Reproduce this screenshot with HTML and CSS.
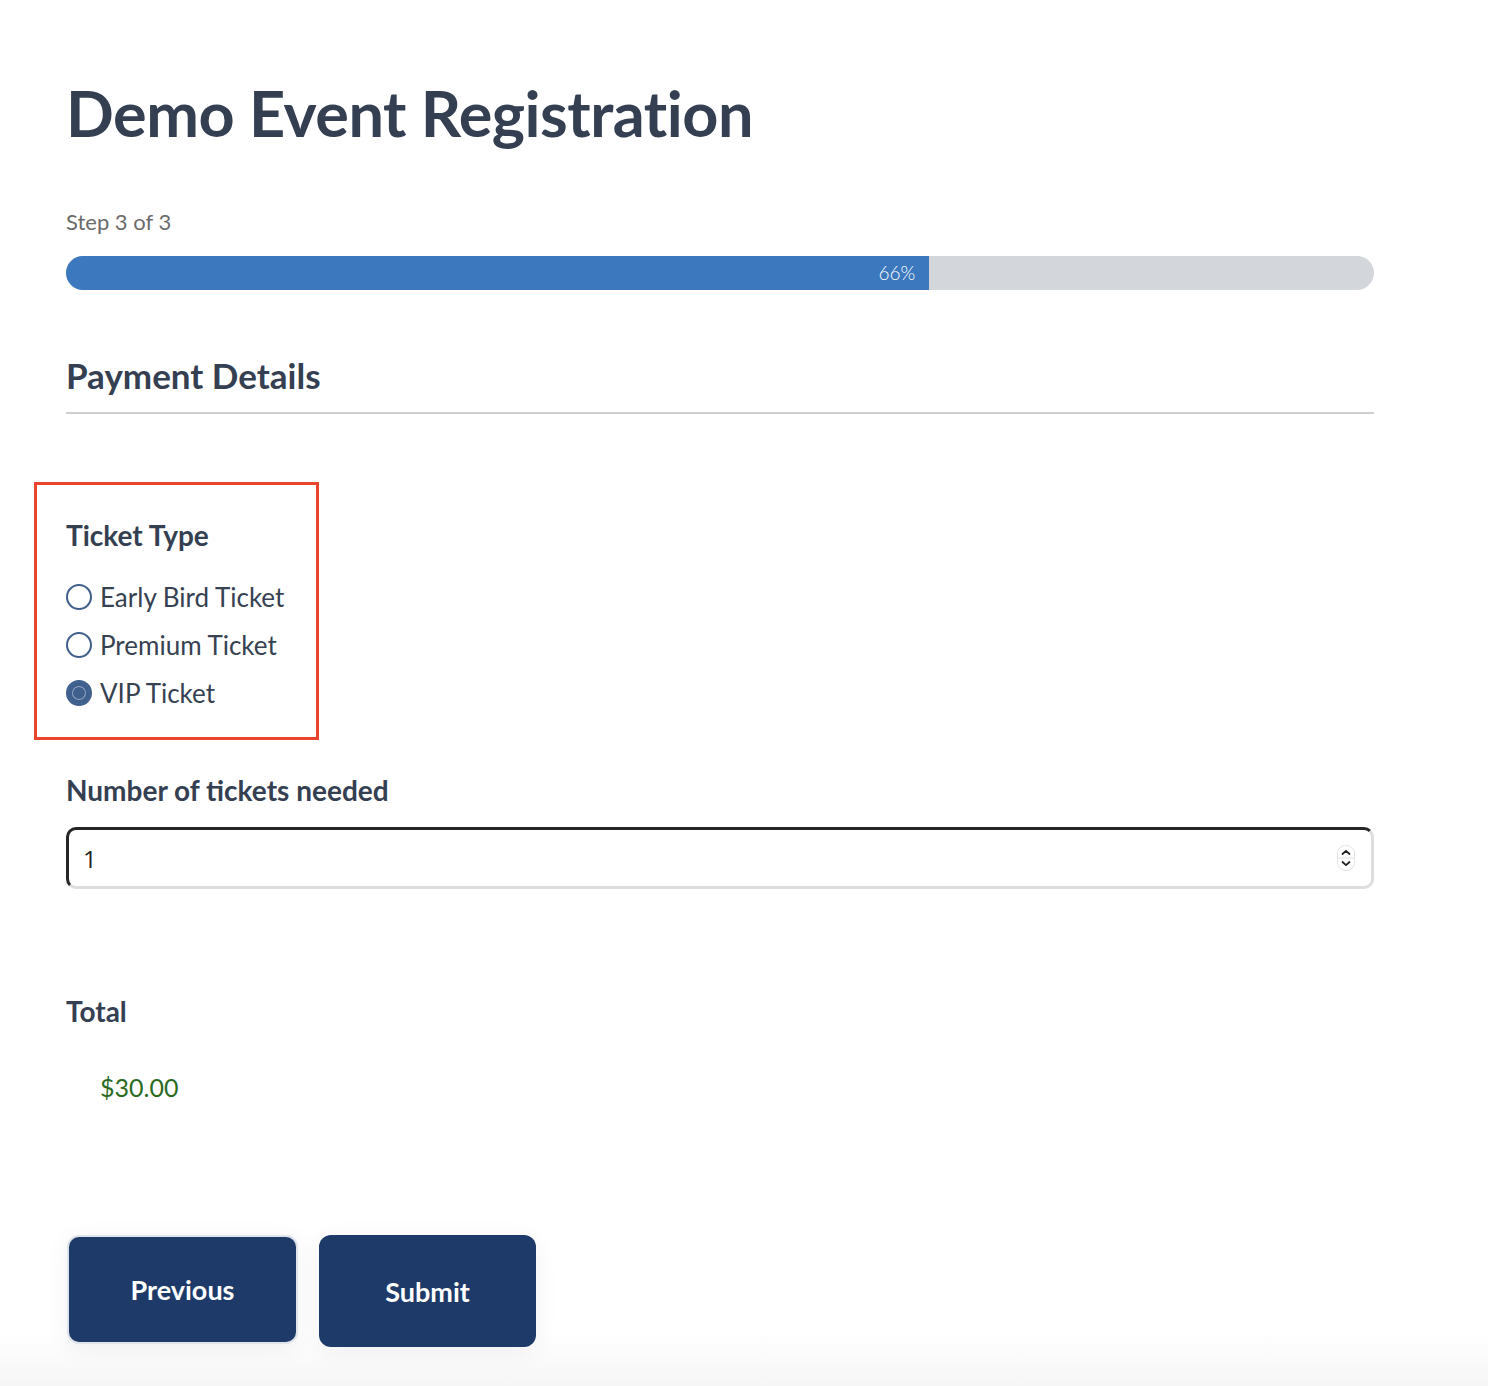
FILE: index.html
```html
<!DOCTYPE html>
<html>
<head>
  <title>Demo Event Registration</title>
  <link rel="stylesheet" href="styles.css">
</head>
<body>
  <div class="page">
    <h1 class="title">Demo Event Registration</h1>

    <div class="steps">
      <div class="step-label">Step 3 of 3</div>
      <div class="progress">
        <div class="progress-fill" style="width: 66%;">66%</div>
      </div>
    </div>

    <div class="section">
      <h2 class="section-title">Payment Details</h2>
    </div>

    <div class="field ticket-box">
      <div class="label">Ticket Type</div>
      <label class="choice"><span class="radio"></span>Early Bird Ticket</label>
      <label class="choice"><span class="radio"></span>Premium Ticket</label>
      <label class="choice"><span class="radio checked"></span>VIP Ticket</label>
    </div>

    <div class="field tickets">
      <div class="label">Number of tickets needed</div>
      <div class="number-input">
        <span class="value">1</span>
        <span class="spinner">
          <svg width="18" height="26" viewBox="0 0 18 26">
            <rect x="0.5" y="0.5" width="17" height="25" rx="8" fill="#fff" stroke="#e2e2e2"/>
            <line x1="1" y1="13" x2="17" y2="13" stroke="#e2e2e2"/>
            <path d="M5.5 9 L9 5.8 L12.5 9" fill="none" stroke="#222" stroke-width="1.8" stroke-linecap="round" stroke-linejoin="round"/>
            <path d="M5.5 17 L9 20.2 L12.5 17" fill="none" stroke="#222" stroke-width="1.8" stroke-linecap="round" stroke-linejoin="round"/>
          </svg>
        </span>
      </div>
    </div>

    <div class="field total">
      <div class="label">Total</div>
      <div class="amount">$30.00</div>
    </div>

    <div class="actions">
      <button class="btn btn-prev">Previous</button>
      <button class="btn">Submit</button>
    </div>
  </div>
</body>
</html>
```

FILE: styles.css
```css
* {
  margin: 0;
  padding: 0;
  box-sizing: border-box;
}

body {
  width: 1488px;
  height: 1386px;
  font-family: Lato, "Liberation Sans", sans-serif;
  color: #364152;
  background: linear-gradient(180deg, #ffffff 0%, #ffffff 96%, #f6f6f6 100%);
  overflow: hidden;
}

.page {
  padding: 78px 114px 0 66px;
}

.title {
  font-size: 63px;
  font-weight: 700;
  color: #353f52;
  letter-spacing: -0.5px;
  line-height: 70px;
}

.steps {
  margin-top: 61px;
}

.step-label {
  font-size: 22px;
  font-weight: 400;
  color: #6b6b6b;
  line-height: 26px;
}

.progress {
  margin-top: 21px;
  height: 34px;
  background: #d3d6da;
  border-radius: 17px;
  overflow: hidden;
}

.progress-fill {
  height: 100%;
  background: #3b78bd;
  color: #fff;
  font-size: 19px;
  font-weight: 300;
  line-height: 34px;
  text-align: right;
  padding-right: 14px;
}

.section {
  margin-top: 65px;
  border-bottom: 2px solid #cfcfcf;
  padding-bottom: 17px;
}

.section-title {
  font-size: 35px;
  font-weight: 700;
  color: #353f52;
  line-height: 40px;
}

.field {
  margin-top: 40px;
}

.ticket-box {
  margin-top: 68px;
  margin-left: -32px;
  width: 285px;
  border: 3px solid #e8452c;
  padding: 34px 0 20px 29px;
}

.label {
  font-size: 28px;
  font-weight: 700;
  color: #353f52;
  line-height: 32px;
}

.ticket-box .label {
  margin-bottom: 22px;
}

.choice {
  display: flex;
  align-items: center;
  gap: 8px;
  font-size: 26px;
  line-height: 30px;
  height: 48px;
  color: #364152;
}

.radio {
  width: 26px;
  height: 26px;
  border-radius: 50%;
  border: 2.5px solid #3f5f8c;
  background: #fff;
  flex-shrink: 0;
}

.radio.checked {
  background: #3f5f8c;
  box-shadow: inset 0 0 0 4px #3f5f8c, inset 0 0 0 5px #8fa3c2;
}

.tickets {
  margin-top: 34px;
}

.number-input {
  margin-top: 21px;
  height: 62px;
  border-radius: 10px;
  border: 3px solid #dddddd;
  border-top-color: #262626;
  border-left-color: #262626;
  display: flex;
  align-items: center;
  justify-content: space-between;
  padding: 0 16px 0 14px;
}

.value {
  font-size: 24px;
  color: #222;
  font-family: "Open Sans", sans-serif;
}

.spinner {
  display: flex;
}

.total {
  margin-top: 106px;
}

.amount {
  margin-top: 45px;
  padding-left: 34px;
  font-size: 25px;
  color: #2b6b1f;
  line-height: 30px;
}

.actions {
  margin-top: 133px;
  display: flex;
  gap: 21px;
  align-items: flex-start;
}

.btn {
  font-family: Lato, "Liberation Sans", sans-serif;
  height: 112px;
  width: 217px;
  background: #1e3a68;
  color: #fff;
  font-size: 27px;
  font-weight: 700;
  border: none;
  border-radius: 12px;
  box-shadow: 0 4px 24px rgba(0, 0, 0, 0.06);
}

.btn-prev {
  width: 231px;
  height: 109px;
  border: 2px solid #dfe3ea;
  margin-left: 1px;
}
```
